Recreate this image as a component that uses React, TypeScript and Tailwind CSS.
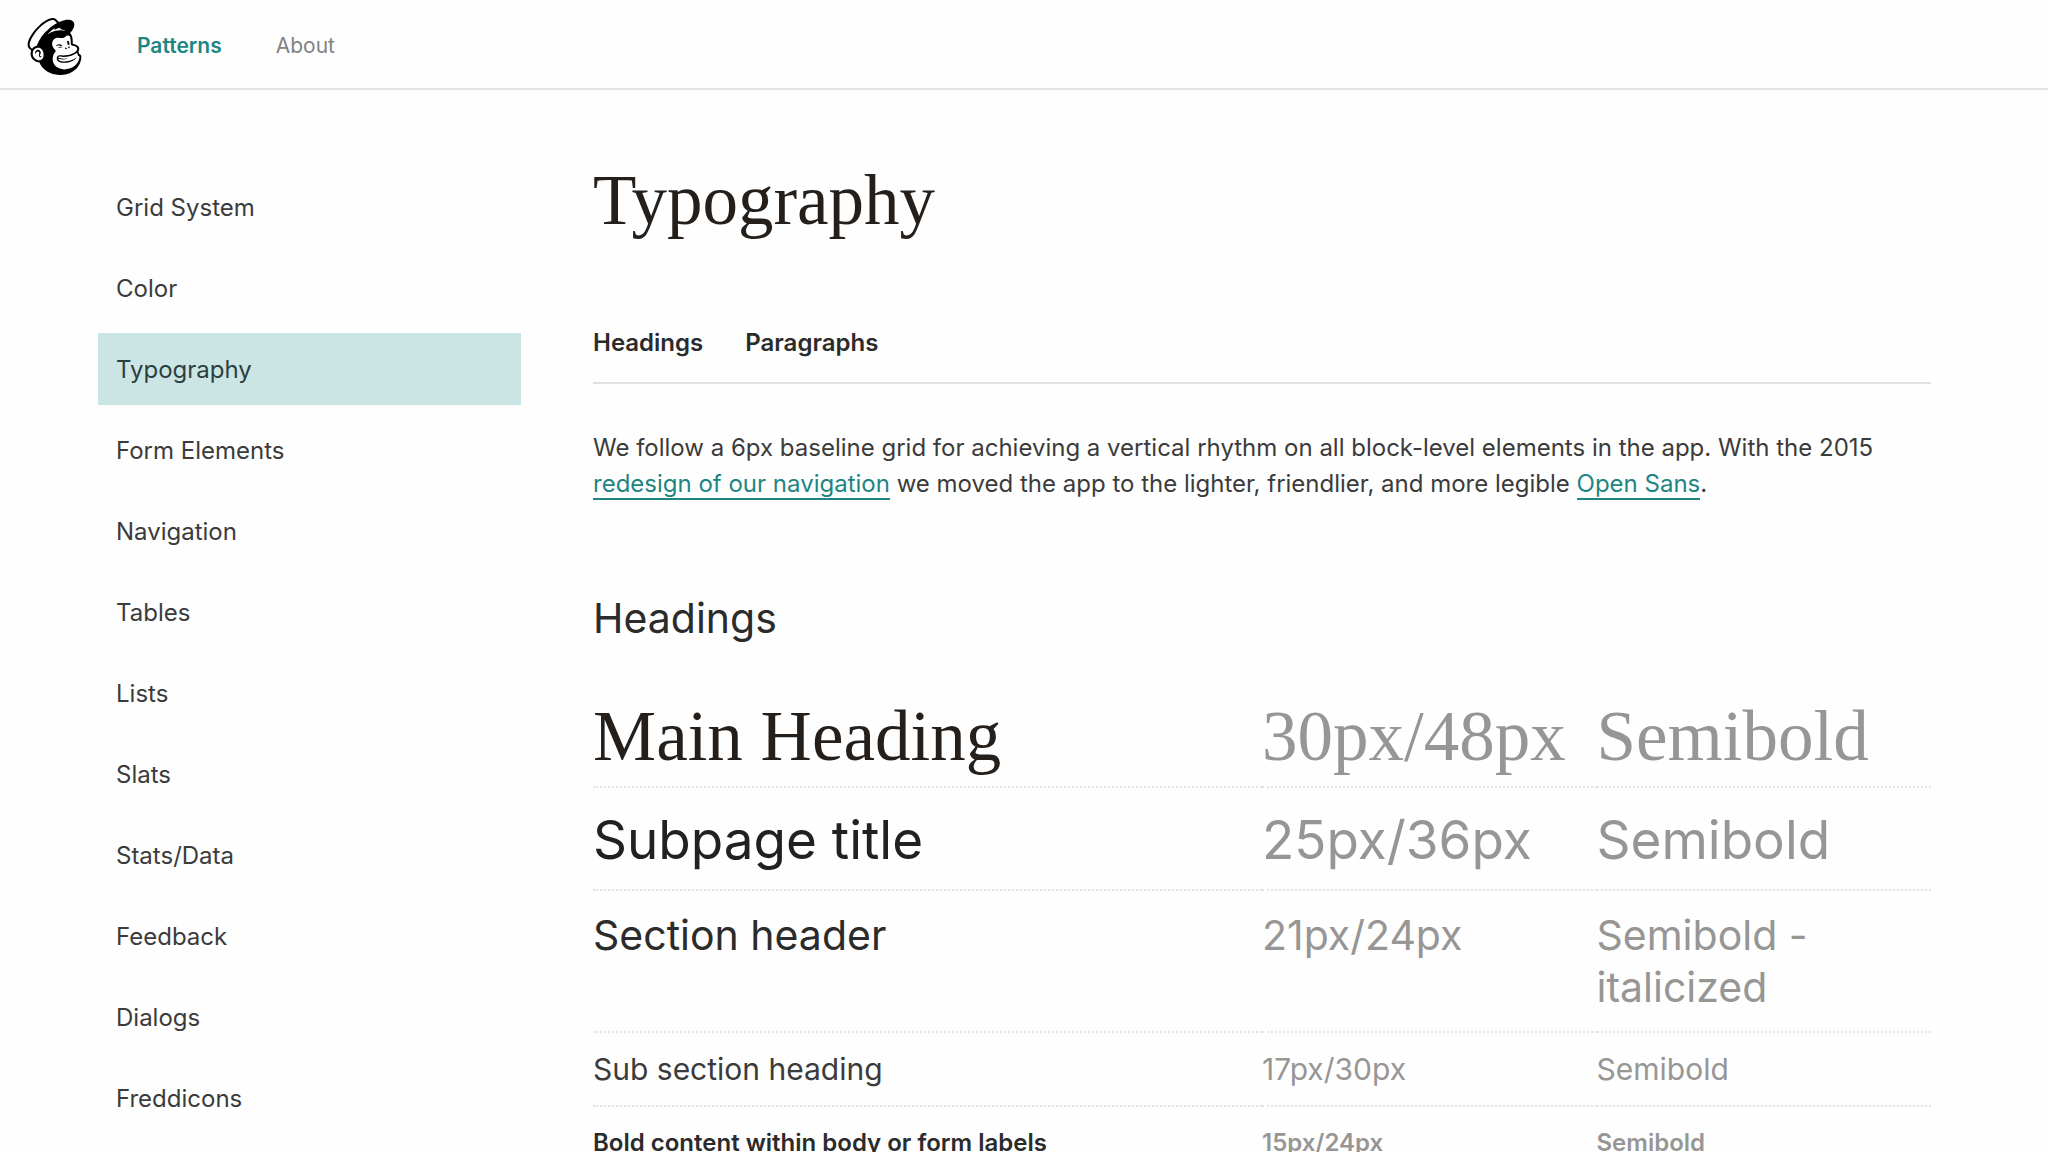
import { SiMailchimp } from "react-icons/si";

const sections = [
  "Grid System",
  "Color",
  "Typography",
  "Form Elements",
  "Navigation",
  "Tables",
  "Lists",
  "Slats",
  "Stats/Data",
  "Feedback",
  "Dialogs",
  "Freddicons",
];

const headings = [
  {
    name: "Main Heading",
    size: "30px/48px",
    weight: "Semibold",
    style: "font-['Liberation_Serif',serif] text-[71px] leading-[84px]",
    cell: "text-[#241f1a] pt-[10px] pb-2",
  },
  {
    name: "Subpage title",
    size: "25px/36px",
    weight: "Semibold",
    style: "text-[53px] leading-[72px]",
    cell: "text-[#22211f] pt-4 pb-[13px]",
  },
  {
    name: "Section header",
    size: "21px/24px",
    weight: "Semibold - italicized",
    style: "text-[41px] leading-[52px]",
    cell: "text-[#2b2b2b] py-[18px]",
  },
  {
    name: "Sub section heading",
    size: "17px/30px",
    weight: "Semibold",
    style: "text-[30px] leading-[40px]",
    cell: "text-[#3b3b3b] py-4",
  },
  {
    name: "Bold content within body or form labels",
    size: "15px/24px",
    weight: "Semibold",
    style: "text-2xl leading-[36px] font-semibold",
    cell: "text-[#2b2b2b] pt-[18px] pb-4",
  },
];

const Header = () => (
  <header className="flex h-[90px] shrink-0 items-center border-b-2 border-[#e4e4e6] pt-1 pl-[26px]">
    <a href="#home" aria-label="Home">
      <SiMailchimp className="size-[57px] text-black" />
    </a>
    <nav className="ml-[54px] flex gap-[54px] text-[21px]">
      <a href="#patterns" className="font-semibold text-[#1e8583]">
        Patterns
      </a>
      <a href="#about" className="text-[#828282]">
        About
      </a>
    </nav>
  </header>
);

const Sidebar = () => (
  <nav className="w-[423px] shrink-0 pt-[81px]">
    <ul className="flex flex-col gap-[9px]">
      {sections.map((section) => (
        <li key={section}>
          <a
            href={`#${section}`}
            className={`block px-[18px] pt-[19px] pb-[17px] text-2xl leading-9 ${
              section === "Typography" ? "bg-[#cbe5e4] text-[#2c3f3f]" : "text-[#3b3b3b]"
            }`}
          >
            {section}
          </a>
        </li>
      ))}
    </ul>
  </nav>
);

const HeadingTable = () => (
  <table className="w-full table-fixed border-collapse text-left align-top">
    <colgroup>
      <col className="w-1/2" />
      <col className="w-1/4" />
      <col className="w-1/4" />
    </colgroup>
    <tbody>
      {headings.map((row) => (
        <tr
          key={row.name}
          className={`border-b-2 border-dotted border-[#e6e3e8] align-top ${row.style}`}
        >
          <td className={row.cell}>{row.name}</td>
          <td className={`whitespace-nowrap ${row.cell}`}>
            <span className="text-[#979695]">{row.size}</span>
          </td>
          <td className={row.cell}>
            <span className="text-[#979695]">{row.weight}</span>
          </td>
        </tr>
      ))}
    </tbody>
  </table>
);

const App = () => {
  const link = "border-b-2 border-[#1e8583] leading-none text-[#1e8583]";

  return (
    <div className="flex h-screen flex-col overflow-hidden bg-[#fefefe] font-[Inter,sans-serif] text-[#3b3b3b]">
      <Header />
      <div className="flex gap-[72px] pr-[117px] pl-[98px]">
        <Sidebar />
        <main className="min-w-0 flex-1 pt-[68px]">
          <h1 className="font-['Liberation_Serif',serif] text-[71px] leading-[84px] text-[#241f1a]">
            Typography
          </h1>

          {/* In-page tabs */}
          <nav className="mt-[83px] flex gap-[42px] border-b-2 border-[#e2e0e4] pb-[21px] text-2xl leading-9 font-semibold text-[#2b2b2b]">
            <a href="#headings">Headings</a>
            <a href="#paragraphs">Paragraphs</a>
          </nav>

          <p className="mt-[46px] text-2xl leading-9">
            We follow a 6px baseline grid for achieving a vertical rhythm on all block-level
            elements in the app. With the 2015{" "}
            <a href="#redesign" className={link}>
              redesign of our navigation
            </a>{" "}
            we moved the app to the lighter, friendlier, and more legible{" "}
            <a href="#open-sans" className={link}>
              Open Sans
            </a>
            .
          </p>

          <h2 id="headings" className="mt-[90px] mb-10 text-[41px] leading-[52px] text-[#2b2b2b]">
            Headings
          </h2>
          <HeadingTable />
        </main>
      </div>
    </div>
  );
};

export default App;
